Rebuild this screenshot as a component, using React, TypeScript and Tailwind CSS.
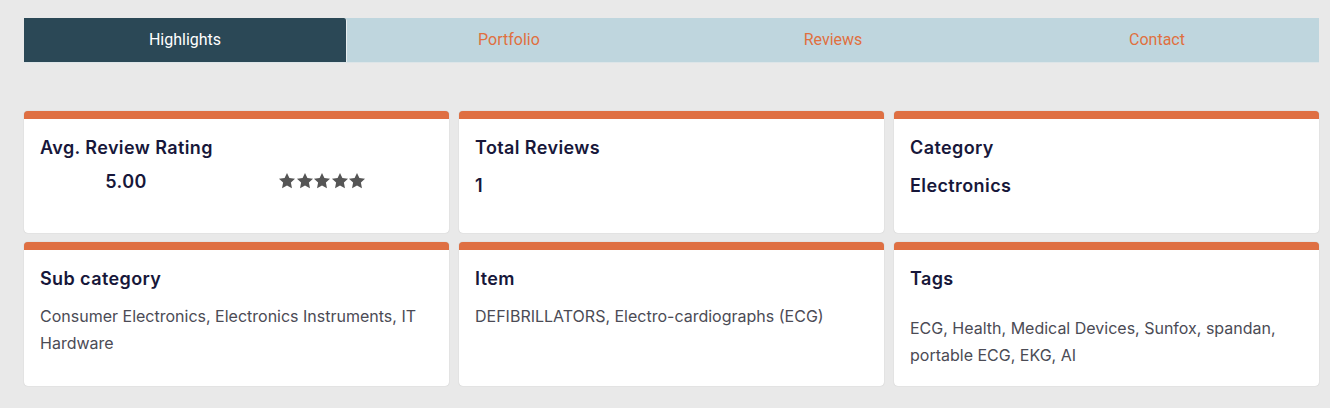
import React from "react";

const tabs = ["Highlights", "Portfolio", "Reviews", "Contact"];

const Star: React.FC = () => (
  <svg viewBox="0 0 24 24" className="w-[18px] h-[18px] -mr-[0.4px] fill-[#555555]">
    <path d="M12 1.2l3.2 6.8 7.5.9-5.5 5.2 1.4 7.4L12 17.9l-6.6 3.6 1.4-7.4-5.5-5.2 7.5-.9z" />
  </svg>
);

const Card: React.FC<{ title: string; children: React.ReactNode; titleClass?: string }> = ({
  title,
  children,
  titleClass = "mb-[11px]",
}) => (
  <div className="bg-white rounded-[4px] border-t-8 border-[#df6f42] shadow-[0_0_1px_rgba(0,0,0,0.25)] px-4 pt-[15px]">
    <h3 className={`text-[18px] leading-[27px] font-semibold tracking-[0.4px] text-[#17173a] ${titleClass}`}>
      {title}
    </h3>
    {children}
  </div>
);

export default function App() {
  return (
    <div className="min-h-screen bg-[#e9e9e9] pl-6 pr-[11px] pt-[18px] font-['Inter',sans-serif]">
      <div className="flex h-[45px] bg-[#bfd6de] border-b border-[#dde5e8] font-['Roboto',sans-serif] text-[16px]">
        {tabs.map((t, i) => (
          <div
            key={t}
            className={
              i === 0
                ? "w-[323px] flex items-center justify-center bg-[#2b4856] text-white rounded-tr-[3px] border-r border-[#e9eef0]"
                : "flex-1 flex items-center justify-center text-[#e0703f]"
            }
          >
            {t}
          </div>
        ))}
      </div>

      <div className="mt-[48px] grid grid-cols-3 gap-x-[10px] gap-y-[9px] grid-rows-[122px_144px]">
        <Card title="Avg. Review Rating" titleClass="mb-[8px]">
          <div className="flex items-center h-[24px] text-[18px] font-semibold tracking-[0.4px] text-[#17173a]">
            <span className="w-[172px] text-center">5.00</span>
            <div className="flex ml-[66px]">
              {[0, 1, 2, 3, 4].map((n) => (
                <Star key={n} />
              ))}
            </div>
          </div>
        </Card>
        <Card title="Total Reviews">
          <p className="text-[18px] leading-[27px] font-semibold text-[#17173a]">1</p>
        </Card>
        <Card title="Category">
          <p className="text-[18px] leading-[27px] font-semibold tracking-[0.4px] text-[#17173a]">Electronics</p>
        </Card>
        <Card title="Sub category">
          <p className="text-[16px] leading-[27px] text-[#4b4b55]">
            Consumer Electronics, Electronics Instruments, IT Hardware
          </p>
        </Card>
        <Card title="Item">
          <p className="text-[16px] leading-[27px] text-[#4b4b55]">
            DEFIBRILLATORS, Electro-cardiographs (ECG)
          </p>
        </Card>
        <Card title="Tags" titleClass="mb-[23px]">
          <p className="text-[16px] leading-[27px] text-[#4b4b55]">
            ECG, Health, Medical Devices, Sunfox, spandan, portable ECG, EKG, AI
          </p>
        </Card>
      </div>
    </div>
  );
}
